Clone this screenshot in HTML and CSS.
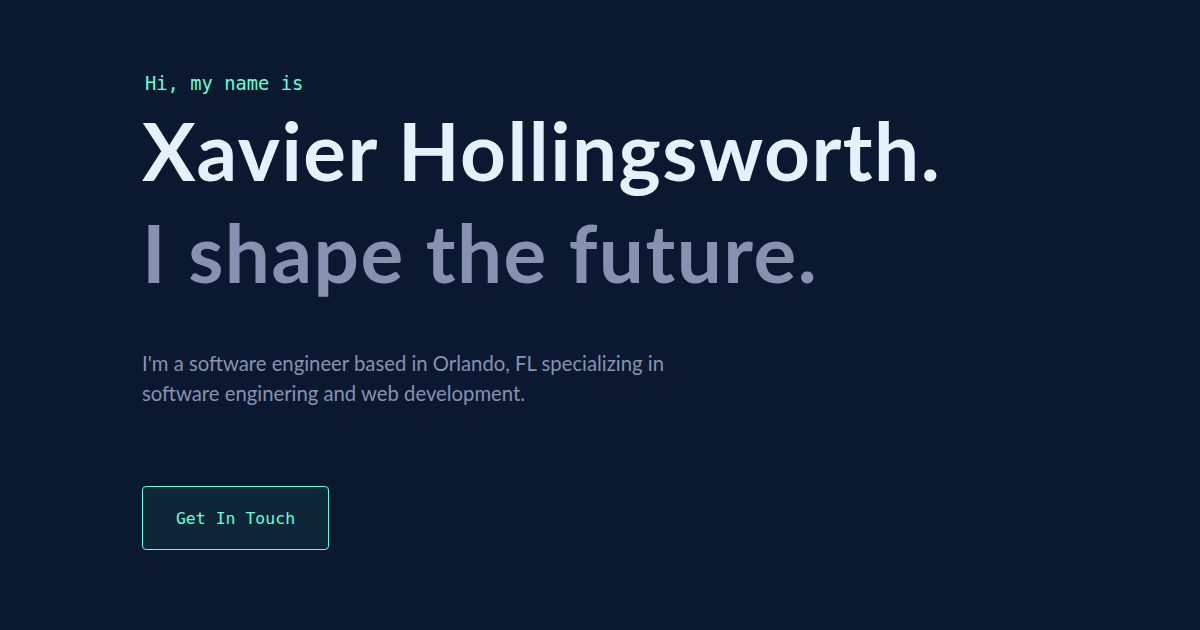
FILE: index.html
```html
<!DOCTYPE html>
<html lang="en">
<head>
<meta charset="utf-8">
<title>Xavier Hollingsworth</title>
<link rel="stylesheet" href="styles.css">
</head>
<body>
<main class="hero">
  <h1 class="intro">Hi, my name is</h1>
  <h2 class="big-heading name">Xavier Hollingsworth.</h2>
  <h3 class="big-heading tagline">I shape the future.</h3>
  <p class="about">I'm a software engineer based in Orlando, FL specializing in software enginering and web development.</p>
  <a class="cta" href="#contact">Get In Touch</a>
</main>
</body>
</html>
```
FILE: styles.css
```css
html, body {
  margin: 0;
  padding: 0;
  background: #0a192f;
  width: 1200px;
  height: 630px;
  overflow: hidden;
}
.hero {
  display: flex;
  flex-direction: column;
  align-items: flex-start;
  padding: 70px 0 0 142px;
}
.intro {
  margin: 0 0 0 3px;
  font-family: "DejaVu Sans Mono", monospace;
  font-weight: 400;
  font-size: 18.8px;
  line-height: 28px;
  color: #64ffda;
}
.big-heading {
  margin: 0;
  font-family: "Lato", sans-serif;
  font-weight: 700;
  font-size: 80px;
  line-height: 102px;
  letter-spacing: 1.5px;
}
.name {
  margin-top: 1px;
  color: #e6f1ff;
}
.tagline {
  color: #8892b0;
}
.about {
  margin: 45px 0 0 0;
  max-width: 545px;
  font-family: "Lato", sans-serif;
  font-size: 20.3px;
  line-height: 30px;
  color: #8892b0;
}
.cta {
  margin-top: 78px;
  box-sizing: border-box;
  width: 187px;
  height: 64px;
  display: flex;
  align-items: center;
  justify-content: center;
  border: 1px solid #64ffda;
  border-radius: 4px;
  background: rgba(100, 255, 218, 0.06);
  font-family: "DejaVu Sans Mono", monospace;
  font-size: 16.5px;
  color: #64ffda;
  text-decoration: none;
}
```
